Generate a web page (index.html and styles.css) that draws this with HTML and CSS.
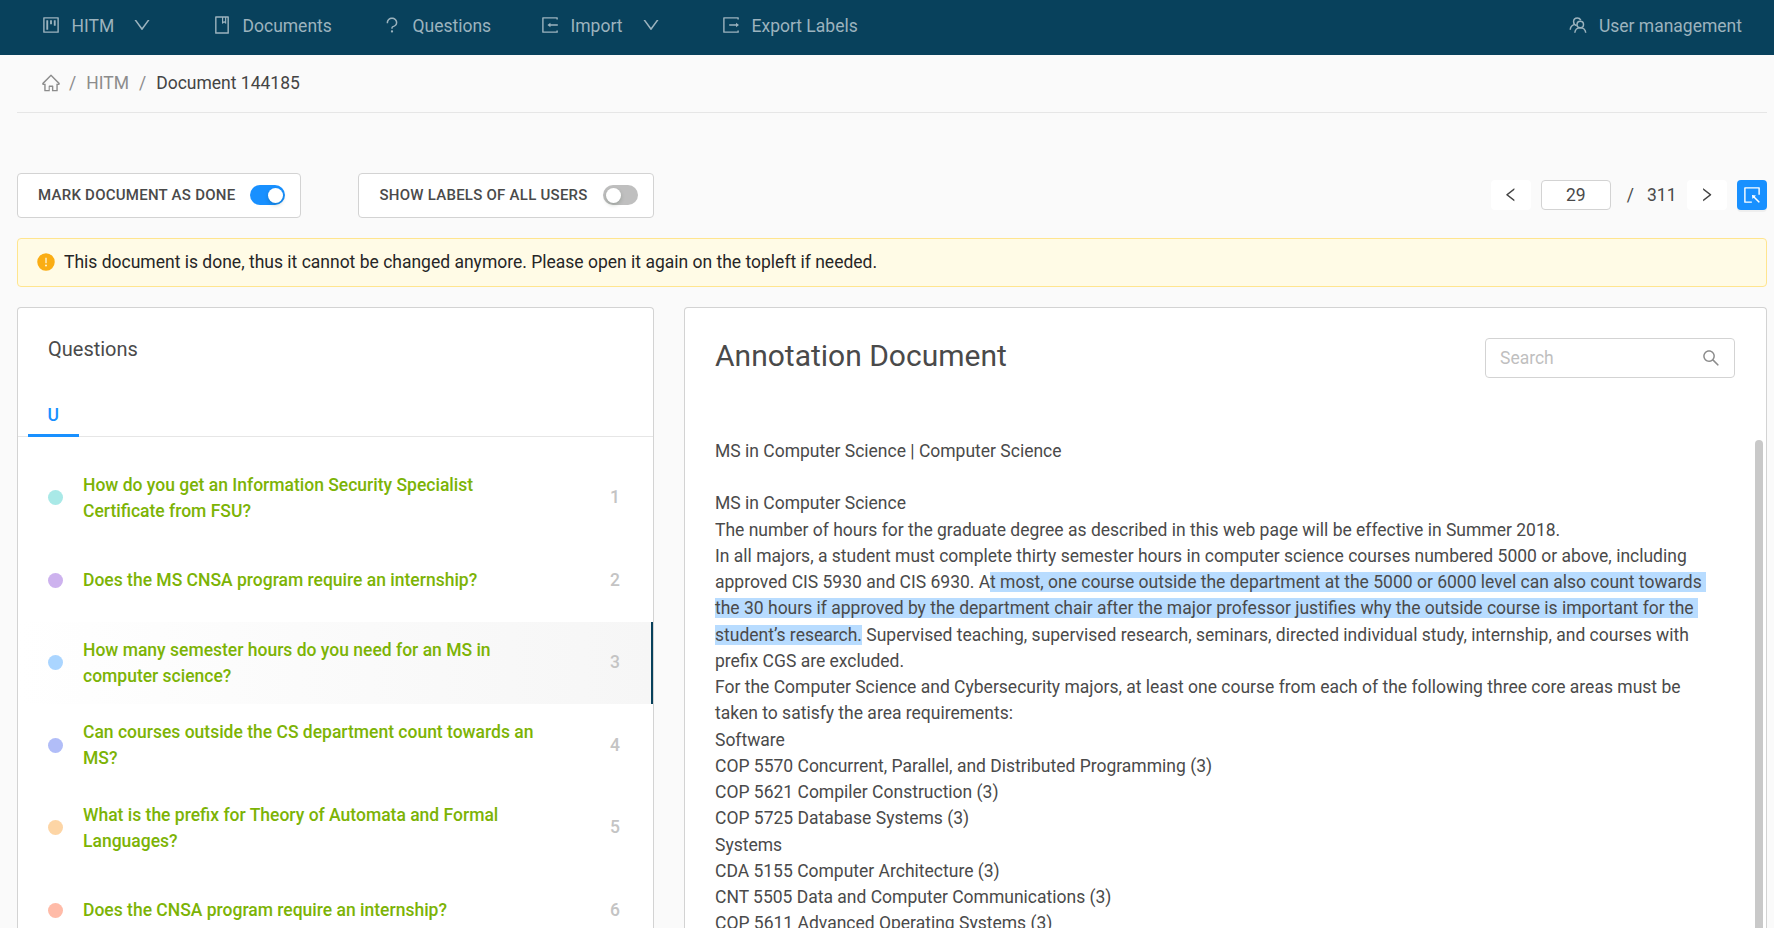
FILE: index.html
```html
<!DOCTYPE html>
<html lang="en">
<head>
<meta charset="utf-8">
<title>Document 144185</title>
<link rel="stylesheet" href="styles.css">
</head>
<body>
<svg class="sprite" xmlns="http://www.w3.org/2000/svg">
  <symbol id="home" viewBox="0 0 1024 1024"><path d="M946.5 505L534.6 93.4a31.930 31.930 0 0 0-45.200 0L77.500 505c-12 12-18.800 28.300-18.800 45.300 0 35.300 28.700 64 64 64h43.400V908c0 17.700 14.300 32 32 32H448V716h112v224h265.900c17.700 0 32-14.300 32-32V614.300h43.400c17 0 33.300-6.700 45.300-18.800 24.900-25 24.900-65.500-.1-90.500zM786 547v321H632V676c0-17.700-14.300-32-32-32H424c-17.700 0-32 14.300-32 32v192H238V547H138L512 163l374 384z"/></symbol>
  <symbol id="down" viewBox="0 0 1024 1024"><path d="M884 256h-75c-5.100 0-9.900 2.500-12.900 6.600L512 654.200 227.900 262.600c-3-4.100-7.800-6.600-12.900-6.600h-75c-6.500 0-10.300 7.400-6.500 12.700l352.600 486.100c12.800 17.600 39 17.600 51.700 0l352.600-486.100c3.900-5.300.1-12.700-6.400-12.700z"/></symbol>
  <symbol id="project" viewBox="0 0 1024 1024"><path fill-rule="evenodd" d="M144 112h736q32 0 32 32v736q0 32-32 32H144q-32 0-32-32V144q0-32 32-32zM184 184v656h656V184zM280 272h80q8 0 8 8v464q0 8-8 8h-80q-8 0-8-8V280q0-8 8-8zM472 272h80q8 0 8 8v184q0 8-8 8h-80q-8 0-8-8V280q0-8 8-8zM664 272h80q8 0 8 8v256q0 8-8 8h-80q-8 0-8-8V280q0-8 8-8z"/></symbol>
  <symbol id="book" viewBox="0 0 1024 1024"><path d="M832 64H192c-17.700 0-32 14.300-32 32v832c0 17.700 14.300 32 32 32h640c17.700 0 32-14.300 32-32V96c0-17.700-14.300-32-32-32zm-260 72h96v209.900L621.500 312 572 347.400V136zm220 752H232V136h280v296.900c0 3.300 1 6.600 3 9.300a15.900 15.900 0 0 0 22.300 3.700l83.800-59.900 81.400 59.400c2.700 2 6 3.100 9.400 3.100 8.800 0 16-7.200 16-16V136h64v752z"/></symbol>
  <symbol id="question" viewBox="0 0 1024 1024"><path d="M764 280.900c-14-30.600-33.900-58.100-59.300-81.600C653.100 151.400 584.600 125 512 125s-141.100 26.400-192.700 74.200c-25.400 23.600-45.300 51-59.300 81.700-14.600 32-22 65.900-22 100.900v27c0 6.200 5 11.200 11.200 11.200h54c6.200 0 11.200-5 11.200-11.200v-27c0-99.500 88.600-180.400 197.600-180.400s197.600 80.900 197.600 180.400c0 40.800-14.500 79.200-42 111.200-27.200 31.700-65.600 54.400-108.100 64-24.300 5.500-46.200 19.200-61.700 38.800a110.850 110.850 0 0 0-23.900 68.600v31.400c0 6.200 5 11.200 11.200 11.200h54c6.200 0 11.200-5 11.200-11.200v-31.400c0-15.700 10.900-29.500 26-32.900 58.400-13.200 111.400-44.700 149.300-88.700 19.100-22.300 34-47.100 44.300-74 10.700-27.900 16.100-57.200 16.100-87 0-35-7.400-69-22-100.900zM512 787c-30.900 0-56 25.100-56 56s25.100 56 56 56 56-25.100 56-56-25.100-56-56-56z"/></symbol>
  <symbol id="import" viewBox="0 0 1024 1024"><path d="M880 112H144c-17.700 0-32 14.300-32 32v736c0 17.700 14.300 32 32 32h736c17.700 0 32-14.300 32-32v-92h-72v52H184V184h656v52h72V144c0-17.700-14.300-32-32-32zM912 476H534V402L380 512l154 110V548h378z"/></symbol>
  <symbol id="export" viewBox="0 0 1024 1024"><path d="M880 112H144c-17.700 0-32 14.300-32 32v736c0 17.700 14.300 32 32 32h736c17.700 0 32-14.300 32-32v-92h-72v52H184V184h656v52h72V144c0-17.700-14.300-32-32-32zM420 476H770V402L920 512 770 622V548H420z"/></symbol>
  <symbol id="team" viewBox="0 0 1024 1024"><g fill="none" stroke="currentColor" stroke-width="76"><circle cx="628" cy="482" r="166"/><path d="M350 912c8-152 126-264 278-264s270 112 278 264M116 756c4-128 72-222 186-262M448 540C350 524 286 448 286 350c0-112 84-196 194-196 78 0 140 42 174 106"/></g></symbol>
  <symbol id="select" viewBox="0 0 1024 1024"><path d="M880 112H144c-17.700 0-32 14.300-32 32v736c0 17.700 14.300 32 32 32h360v-72H184V184h656v320h72V144c0-17.700-14.300-32-32-32zM653 599l52-52c5-5 1-13-5-14l-179-21c-5-1-10 4-9 9l21 179c1 7 9 9 14 5l52-52 256 256c3 3 8 3 11 0l43-43c3-3 3-8 0-11z"/></symbol>
  <symbol id="search" viewBox="0 0 1024 1024"><path d="M909.600 854.500L649.900 594.800C690.200 542.700 712 479 712 412c0-80.200-31.300-155.400-87.900-212.100-56.600-56.700-132-87.900-212.100-87.900s-155.500 31.300-212.100 87.900C143.200 256.500 112 331.800 112 412c0 80.100 31.300 155.500 87.900 212.100C256.500 680.800 331.800 712 412 712c67 0 130.600-21.800 182.700-62l259.700 259.600a8.200 8.200 0 0 0 11.600 0l43.600-43.500a8.200 8.200 0 0 0 0-11.600zM570.400 570.400C528 612.700 471.800 636 412 636s-116-23.300-158.400-65.600C211.300 528 188 471.800 188 412s23.300-116.100 65.600-158.400C296 211.300 352.200 188 412 188s116.100 23.200 158.400 65.600S636 352.200 636 412s-23.300 116.100-65.600 158.400z"/></symbol>
  <symbol id="left" viewBox="0 0 1024 1024"><path d="M724 218.300V141c0-6.700-7.700-10.400-12.900-6.300L260.300 486.800a31.860 31.860 0 0 0 0 50.300l450.800 352.100c5.300 4.100 12.900.4 12.900-6.300v-77.300c0-4.900-2.300-9.600-6.100-12.600l-360-281 360-281.100c3.800-3 6.100-7.700 6.100-12.600z"/></symbol>
  <symbol id="warn" viewBox="0 0 1024 1024"><path d="M512 64a448 448 0 1 0 0 896 448 448 0 0 0 0-896zm-32 232c0-4.400 3.600-8 8-8h48c4.400 0 8 3.600 8 8v272c0 4.400-3.600 8-8 8h-48c-4.400 0-8-3.600-8-8V296zm32 440a48 48 0 1 1 0-96 48 48 0 0 1 0 96z"/></symbol>
</svg>

<nav class="navbar">
  <a class="nav-item nav-project"><svg class="icon"><use href="#project"/></svg>HITM<svg class="icon caret"><use href="#down"/></svg></a>
  <a class="nav-item nav-documents"><svg class="icon"><use href="#book"/></svg>Documents</a>
  <a class="nav-item nav-questions"><svg class="icon"><use href="#question"/></svg>Questions</a>
  <a class="nav-item nav-import"><svg class="icon"><use href="#import"/></svg>Import<svg class="icon caret"><use href="#down"/></svg></a>
  <a class="nav-item nav-export"><svg class="icon"><use href="#export"/></svg>Export Labels</a>
  <a class="nav-item nav-users"><svg class="icon"><use href="#team"/></svg>User management</a>
</nav>

<main class="page">
  <div class="breadcrumb"><svg class="icon"><use href="#home"/></svg><span class="sep">/</span><span>HITM</span><span class="sep">/</span><span class="current">Document 144185</span></div>

  <div class="toolbar">
    <label class="toggle-box done"><span>MARK DOCUMENT AS DONE</span><span class="switch on"></span></label>
    <label class="toggle-box all"><span>SHOW LABELS OF ALL USERS</span><span class="switch"></span></label>
    <div class="pager">
      <button class="page-btn"><svg class="icon"><use href="#left"/></svg></button>
      <span class="page-input">29</span>
      <span class="slash">/</span>
      <span class="total">311</span>
      <button class="page-btn"><svg class="icon flip"><use href="#left"/></svg></button>
      <button class="select-btn"><svg class="icon"><use href="#select"/></svg></button>
    </div>
  </div>

  <div class="alert"><svg class="icon"><use href="#warn"/></svg>This document is done, thus it cannot be changed anymore. Please open it again on the topleft if needed.</div>

  <div class="columns">
    <section class="card questions">
      <h3 class="questions-title">Questions</h3>
      <div class="tabs"><span class="tab">U</span></div>
      <ul class="list">
        <li class="row"><i class="dot teal"></i><span class="text">How do you get an Information Security Specialist Certificate from FSU?</span><span class="num">1</span></li>
        <li class="row"><i class="dot purple"></i><span class="text">Does the MS CNSA program require an internship?</span><span class="num">2</span></li>
        <li class="row active"><i class="dot sky"></i><span class="text">How many semester hours do you need for an MS in computer science?</span><span class="num">3</span></li>
        <li class="row"><i class="dot indigo"></i><span class="text">Can courses outside the CS department count towards an MS?</span><span class="num">4</span></li>
        <li class="row"><i class="dot orange"></i><span class="text">What is the prefix for Theory of Automata and Formal Languages?</span><span class="num">5</span></li>
        <li class="row"><i class="dot red"></i><span class="text">Does the CNSA program require an internship?</span><span class="num">6</span></li>
      </ul>
    </section>

    <section class="card document">
      <header class="doc-head">
        <h2 class="doc-title">Annotation Document</h2>
        <div class="search"><span>Search</span><svg class="icon"><use href="#search"/></svg></div>
      </header>
      <div class="doc-scroll">
        <div class="doc-text">MS in Computer Science | Computer Science

MS in Computer Science
The number of hours for the graduate degree as described in this web page will be effective in Summer 2018.
In all majors, a student must complete thirty semester hours in computer science courses numbered 5000 or above, including
approved CIS 5930 and CIS 6930. A<mark>t most, one course outside the department at the 5000 or 6000 level can also count towards </mark>
<mark>the 30 hours if approved by the department chair after the major professor justifies why the outside course is important for the </mark>
<mark>student’s research.</mark> Supervised teaching, supervised research, seminars, directed individual study, internship, and courses with
prefix CGS are excluded.
For the Computer Science and Cybersecurity majors, at least one course from each of the following three core areas must be
taken to satisfy the area requirements:
Software
COP 5570 Concurrent, Parallel, and Distributed Programming (3)
COP 5621 Compiler Construction (3)
COP 5725 Database Systems (3)
Systems
CDA 5155 Computer Architecture (3)
CNT 5505 Data and Computer Communications (3)
COP 5611 Advanced Operating Systems (3)</div>
        <div class="scrollbar"></div>
      </div>
    </section>
  </div>
</main>
</body>
</html>
```
FILE: styles.css
```css
* { box-sizing: border-box; }
html, body { height: 100%; }
body {
  margin: 0;
  display: flex;
  flex-direction: column;
  overflow: hidden;
  background: #fafafa;
  color: #4a4a4a;
  font: 17.5px/26.25px Roboto, sans-serif;
}
.sprite { display: none; }
.icon { width: 20px; height: 20px; fill: currentColor; flex: none; }

.navbar {
  flex: none;
  height: 55px;
  padding: 0 32px 3px 40.5px;
  display: flex;
  align-items: center;
  background: #08415c;
  color: #9cb3be;
  line-height: 28px;
}
.nav-item { display: flex; align-items: center; gap: 11px; white-space: nowrap; }
.nav-item .icon { margin-bottom: 2px; }
.nav-item .caret { margin-left: 7px; }
.nav-project { width: 171px; }
.nav-documents { width: 170px; }
.nav-questions { width: 158px; }
.nav-import { width: 181px; }
.nav-users { margin-left: auto; }

.page { flex: 1; min-height: 0; padding: 0 7px 0 17px; display: flex; flex-direction: column; }

.breadcrumb {
  flex: none;
  height: 58px;
  padding-left: 23.5px;
  display: flex;
  align-items: center;
  border-bottom: 1px solid #e6e6e6;
  color: #8c8c8c;
}
.breadcrumb .icon { margin: 0 -1.5px 2px 0; }
.breadcrumb .sep { margin: 0 10px; }
.breadcrumb .current { color: #444; }

.toolbar { flex: none; height: 45px; margin-top: 60px; display: flex; align-items: stretch; }
.toggle-box {
  display: flex;
  align-items: center;
  justify-content: space-between;
  padding: 0 15px 0 20px;
  border: 1px solid #d3d3d3;
  border-radius: 4px;
  background: #fff;
  font-size: 15px;
  font-weight: 500;
  letter-spacing: .25px;
  white-space: nowrap;
}
.done { width: 284px; }
.all { width: 296px; margin-left: 57px; padding-left: 20.5px; }
.switch {
  width: 35px;
  height: 20px;
  margin-bottom: 1px;
  padding: 2.5px;
  border-radius: 10px;
  background: #bfbfbf;
  display: flex;
}
.switch::before {
  content: "";
  width: 15px;
  height: 15px;
  border-radius: 50%;
  background: #fff;
  box-shadow: 0 2px 4px rgba(0, 35, 11, .2);
}
.switch.on { background: #1890ff; justify-content: flex-end; padding-right: 2px; }

.pager { margin-left: auto; padding-bottom: 1px; display: flex; align-items: center; }
.page-btn, .select-btn {
  height: 30px;
  padding: 0;
  border: 0;
  border-radius: 4px;
  display: flex;
  align-items: center;
  justify-content: center;
}
.page-btn { width: 40px; background: #fff; color: #444; }
.page-btn .icon { width: 17.5px; height: 17.5px; }
.flip { transform: scaleX(-1); }
.page-input {
  width: 70px;
  height: 30px;
  margin-left: 10px;
  border: 1px solid #d3d3d3;
  border-radius: 4px;
  background: #fff;
  text-align: center;
  line-height: 28px;
}
.slash { margin-left: 16px; }
.total { margin: 0 10.5px 0 13px; }
.select-btn { width: 30px; margin-left: 10px; background: #1890ff; color: #fff; box-shadow: 0 2px 0 rgba(0, 0, 0, .045); }

.alert {
  flex: none;
  height: 49px;
  margin-top: 20px;
  padding: 0 20px;
  display: flex;
  align-items: center;
  gap: 7.75px;
  border: 1px solid #ffe58f;
  border-radius: 4px;
  background: #fffbe6;
  color: #262626;
}
.alert .icon { margin: 0 0 1px -1.75px; color: #faad14; }

.columns { flex: 1; min-height: 0; margin-top: 20px; display: flex; gap: 30px; }
.card {
  border: 1px solid #d3d3d3;
  border-bottom: 0;
  border-radius: 4px 4px 0 0;
  background: #fff;
  overflow: hidden;
}
.questions { width: 637px; flex: none; }
.questions-title { margin: 0; padding: 26px 30px 0; font-size: 20px; font-weight: 400; line-height: 30px; }
.tabs { height: 73px; padding: 0 10px; border-bottom: 1px solid #e6e6e6; display: flex; align-items: flex-end; }
.tab {
  width: 51px;
  height: 35px;
  margin-bottom: -1px;
  padding-left: 19.5px;
  border-bottom: 3px solid #1890ff;
  color: #1890ff;
  font-weight: 500;
}
.list { margin: 0; padding: 19.6px 0 0; list-style: none; }
.row { height: 82.5px; padding: 0 31px 0 30px; display: flex; align-items: center; }
.active { padding-right: 29px; border-right: 2px solid #08415c; background: linear-gradient(90deg, #fff, #f6f6f6); }
.dot { width: 15px; height: 15px; flex: none; border-radius: 50%; }
.teal { background: #a9e9e7; }
.purple { background: #cdb2ee; }
.sky { background: #aad5ff; }
.indigo { background: #b1bdf8; }
.orange { background: #fdd5a5; }
.red { background: #ffbba8; }
.text { width: 460px; margin-left: 20px; color: #7cb305; font-weight: 500; }
.num { margin-left: auto; margin-right: 2px; padding-bottom: .6px; color: #c4c4c4; font-weight: 500; }

.document { flex: 1; min-width: 0; display: flex; flex-direction: column; }
.doc-head { flex: none; height: 129.85px; padding: 30px 31px 0 30px; display: flex; justify-content: space-between; align-items: flex-start; }
.doc-title { margin: 0; font-size: 30px; font-weight: 400; line-height: 36px; }
.search {
  width: 250px;
  height: 40px;
  padding: 0 13px 0 14px;
  display: flex;
  align-items: center;
  justify-content: space-between;
  border: 1px solid #d3d3d3;
  border-radius: 4px;
  color: #bfbfbf;
}
.search .icon { color: #8c8c8c; }
.doc-scroll { flex: 1; min-height: 0; padding: 0 3px 0 30px; display: flex; justify-content: space-between; overflow: hidden; }
.doc-text { white-space: pre; }
mark { background: #b8dcff; color: inherit; }
.scrollbar { width: 8px; margin-top: 2.15px; border-radius: 4px 4px 0 0; background: #c9c9c9; }
```
